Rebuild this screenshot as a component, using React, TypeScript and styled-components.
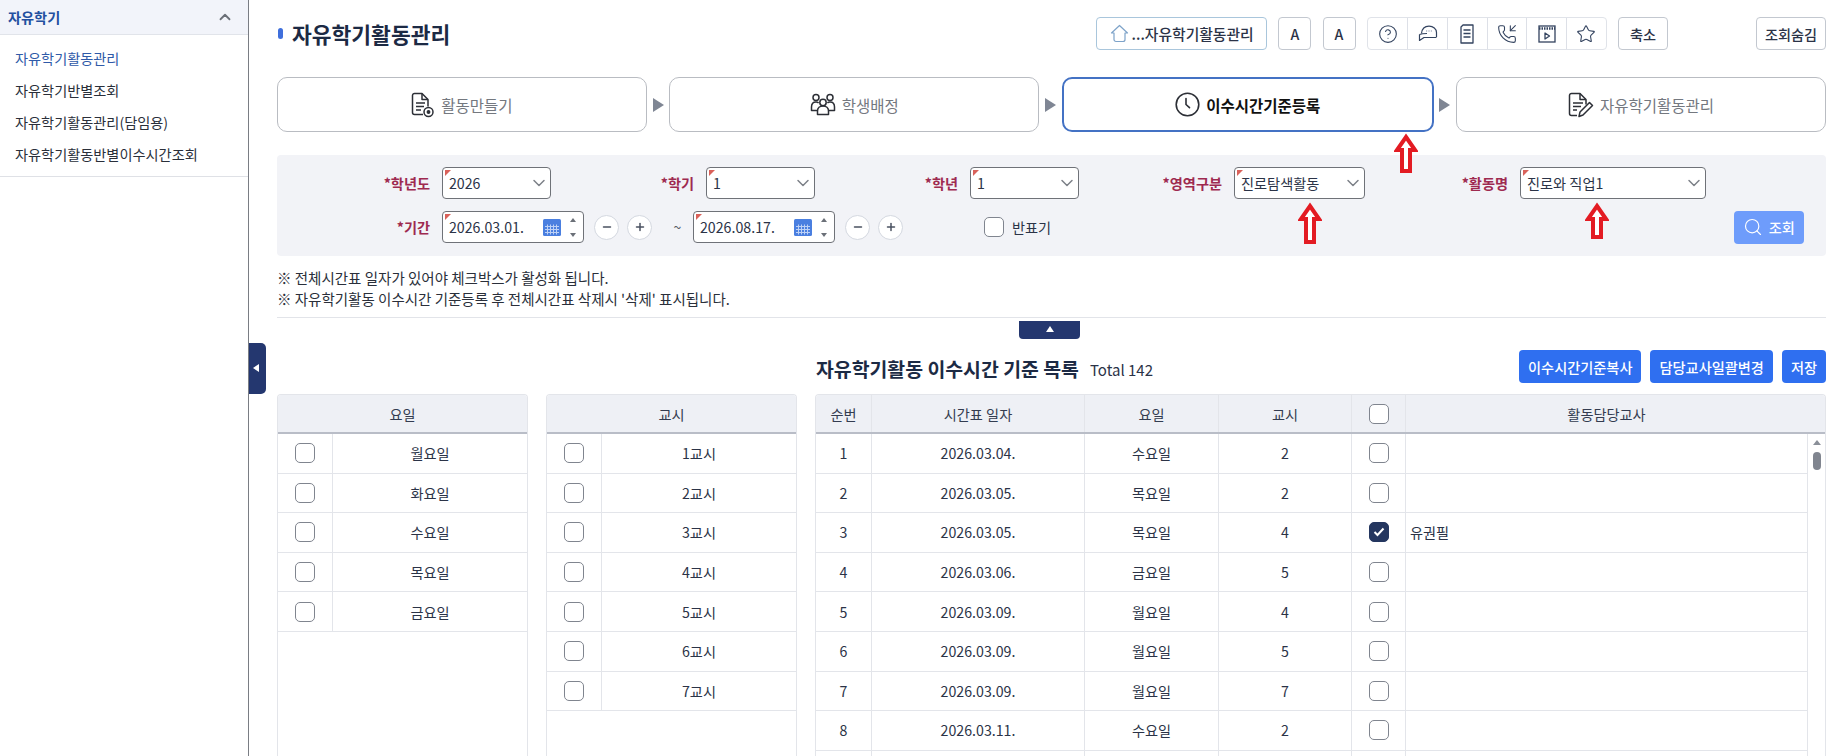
import React from "react";
import styled, { createGlobalStyle } from "styled-components";
import { ChevronDown, ChevronUp, CircleHelp, Minus, PhoneIncoming, Plus, Search, Star } from "lucide-react";

const GlobalStyle = createGlobalStyle`
  html, body, #root {
    height: 100%;
    margin: 0;
  }
  body {
    font-family: "Noto Sans CJK KR", "Noto Sans", sans-serif;
    font-size: 14.2px;
    color: #2b3347;
    background: #ffffff;
    overflow: hidden;
  }
  * {
    box-sizing: border-box;
  }
`;

const Page = styled.div`
  position: relative;
  display: flex;
  height: 756px;
  overflow: hidden;
`;

const Sidebar = styled.aside`
  flex: 0 0 249px;
  border-right: 1.5px solid #7a7d84;
`;

const SideHead = styled.div`
  display: flex;
  align-items: center;
  justify-content: space-between;
  height: 35px;
  padding: 0 14px 0 8px;
  background: #f2f4fa;
  border-bottom: 1px solid #e1e4ea;
  color: #2350a0;
  font-weight: 700;
  svg {
    color: #6b7078;
  }
`;

const SideList = styled.ul`
  list-style: none;
  margin: 0;
  padding: 6.5px 0 6.5px 15px;
  border-bottom: 1px solid #dfe1e6;
`;

const SideItem = styled.li<{ $active?: boolean }>`
  height: 32px;
  line-height: 32px;
  color: ${(p) => (p.$active ? "#2f5aa8" : "#2a2f3a")};
`;

const SideToggle = styled.button`
  position: absolute;
  left: 249px;
  top: 343px;
  width: 17px;
  height: 51px;
  padding: 0;
  border: none;
  border-radius: 0 5px 5px 0;
  background: #24376f;
  &::before {
    content: "";
    position: absolute;
    left: 4px;
    top: 21px;
    border-style: solid;
    border-width: 4.5px 6px 4.5px 0;
    border-color: transparent #ffffff transparent transparent;
  }
`;

const Main = styled.main`
  flex: 1;
  min-width: 0;
  display: flex;
  flex-direction: column;
  padding: 17px 19px 0 28px;
`;

const Header = styled.header`
  display: flex;
  align-items: center;
  gap: 11.2px;
  height: 33px;
`;

const Title = styled.h1`
  display: flex;
  align-items: center;
  gap: 9px;
  margin: -1px auto 0 1px;
  font-size: 21.5px;
  font-weight: 700;
  color: #1c2a44;
  &::before {
    content: "";
    width: 5px;
    height: 11px;
    border-radius: 3px;
    background: #3f6fdc;
  }
`;

const ToolButton = styled.button<{ $width: number; $blue?: boolean; $gapLeft?: number }>`
  display: flex;
  align-items: center;
  justify-content: center;
  gap: 3px;
  width: ${(p) => p.$width}px;
  height: 33px;
  margin-left: ${(p) => p.$gapLeft ?? 0}px;
  padding: 0;
  background: #ffffff;
  border: 1px solid ${(p) => (p.$blue ? "#a9c6dc" : "#c3c8d0")};
  border-radius: 4px;
  font: inherit;
  font-size: ${(p) => (p.$blue ? "14.8px" : "14.2px")};
  font-weight: 500;
  color: #2b3347;
  white-space: nowrap;
`;

const IconGroup = styled.div`
  display: flex;
  height: 33px;
  border: 1px solid #e0e3e9;
  border-radius: 4px;
`;

const IconCell = styled.div`
  display: flex;
  align-items: center;
  justify-content: center;
  width: 39.7px;
  color: #33435f;
  & + & {
    border-left: 1px solid #dde0e7;
  }
`;

const Steps = styled.div`
  display: flex;
  height: 55px;
  margin-top: 27px;
`;

const Step = styled.div<{ $active?: boolean }>`
  flex: 1;
  display: flex;
  align-items: center;
  justify-content: center;
  gap: 6px;
  background: #ffffff;
  border: ${(p) => (p.$active ? "2px solid #4472c4" : "1px solid #b9bcc2")};
  border-radius: 10px;
  font-size: 15.5px;
  font-weight: ${(p) => (p.$active ? 700 : 400)};
  color: ${(p) => (p.$active ? "#111111" : "#74787f")};
  svg {
    color: #2c2f36;
  }
`;

const StepArrow = styled.div`
  flex: 0 0 22.5px;
  display: flex;
  align-items: center;
  justify-content: center;
  &::before {
    content: "";
    border-style: solid;
    border-width: 7px 0 7px 11px;
    border-color: transparent transparent transparent #7f8694;
  }
`;

const SearchPanel = styled.section`
  display: flex;
  flex-direction: column;
  gap: 12px;
  height: 101px;
  margin-top: 23px;
  padding-top: 12px;
  background: #f2f3f7;
  border-radius: 4px;
`;

const SearchRow = styled.div`
  display: flex;
  align-items: center;
  height: 32px;
`;

const FieldLabel = styled.label<{ $width: number }>`
  flex: 0 0 ${(p) => p.$width}px;
  padding-right: 12px;
  text-align: right;
  font-weight: 700;
  color: #9e2a50;
`;

const RequiredBox = styled.div<{ $width: number }>`
  position: relative;
  flex: 0 0 ${(p) => p.$width}px;
  display: flex;
  align-items: center;
  height: 32px;
  padding: 0 7px 0 6px;
  background: #ffffff;
  border: 1px solid #6f7278;
  border-radius: 4px;
  color: #2b3347;
  &::before {
    content: "";
    position: absolute;
    left: 2px;
    top: 2px;
    border-style: solid;
    border-width: 6px 6px 0 0;
    border-color: #d9615a transparent transparent transparent;
  }
`;

const BoxText = styled.span`
  flex: 1;
  white-space: nowrap;
`;

const SelectChevron = styled(ChevronDown)`
  color: #7d8188;
  margin-right: -6px;
`;

const Spinner = styled.div`
  display: flex;
  flex-direction: column;
  justify-content: space-between;
  height: 19px;
  margin-left: 9px;
  span {
    border-style: solid;
    border-width: 0 3px 4px 3px;
    border-color: transparent transparent #6b7078 transparent;
  }
  span + span {
    border-width: 4px 3px 0 3px;
    border-color: #6b7078 transparent transparent transparent;
  }
`;

const RoundGroup = styled.div`
  display: flex;
  gap: 8px;
  margin-left: 10px;
`;

const RoundButton = styled.button`
  display: flex;
  align-items: center;
  justify-content: center;
  width: 25px;
  height: 25px;
  padding: 0;
  background: #ffffff;
  border: 1px solid #d4d8e0;
  border-radius: 50%;
  color: #4a5160;
`;

const Tilde = styled.span`
  flex: 0 0 41px;
  padding-left: 10px;
  text-align: center;
  font-size: 14px;
  color: #555a63;
`;

const Check = styled.span<{ $checked?: boolean }>`
  flex: 0 0 20px;
  display: inline-flex;
  align-items: center;
  justify-content: center;
  width: 20px;
  height: 20px;
  background: ${(p) => (p.$checked ? "#24365f" : "#ffffff")};
  border: 1.5px solid ${(p) => (p.$checked ? "#24365f" : "#80858f")};
  border-radius: 5px;
`;

const HalfCheck = styled.label`
  display: flex;
  align-items: center;
  gap: 8px;
  margin-left: 81px;
`;

const SearchButton = styled.button`
  display: flex;
  align-items: center;
  justify-content: center;
  gap: 6px;
  width: 70.5px;
  height: 33px;
  margin: 0 22px 0 auto;
  padding: 0;
  border: none;
  border-radius: 4px;
  background: #6e9cfb;
  color: #ffffff;
  font: inherit;
  font-weight: 500;
`;

const Notes = styled.div`
  margin-top: 10.5px;
  padding-bottom: 7.5px;
  font-size: 14.5px;
  line-height: 21.5px;
  border-bottom: 1px solid #e2e4e9;
  color: #2a2f3a;
`;

const CollapseTab = styled.button`
  position: relative;
  align-self: center;
  width: 61px;
  height: 18px;
  margin: 3px 5px 0 0;
  padding: 0;
  border: none;
  border-radius: 0 0 4px 4px;
  background: #24376f;
  &::before {
    content: "";
    position: absolute;
    left: 27px;
    top: 5px;
    border-style: solid;
    border-width: 0 4.5px 6px 4.5px;
    border-color: transparent transparent #ffffff transparent;
  }
`;

const ListHead = styled.div`
  display: flex;
  align-items: flex-end;
  height: 33px;
  margin-top: 11px;
  padding-left: 539px;
`;

const ListTitle = styled.h2`
  margin: 0;
  font-size: 19.4px;
  line-height: 28px;
  font-weight: 700;
  color: #1c2a44;
`;

const Total = styled.span`
  margin: 0 auto 0 11px;
  font-size: 15px;
  line-height: 27px;
  color: #2b3347;
`;

const ActionRow = styled.div`
  display: flex;
  align-self: stretch;
  gap: 9px;
`;

const ActionButton = styled.button`
  height: 33px;
  padding: 0 9px;
  border: none;
  border-radius: 4px;
  background: #2f6ff0;
  color: #ffffff;
  font: inherit;
  font-weight: 500;
  white-space: nowrap;
`;

const Tables = styled.div`
  flex: 1;
  min-height: 0;
  display: flex;
  gap: 18px;
  margin-top: 11px;
`;

const Table = styled.div<{ $width: number }>`
  flex: 0 0 ${(p) => p.$width}px;
  display: flex;
  flex-direction: column;
  border: 1px solid #e3e5ea;
  border-bottom: none;
  border-radius: 4px 4px 0 0;
  overflow: hidden;
`;

const HeadRow = styled.div<{ $cols: string; $railGap?: number }>`
  flex: 0 0 39px;
  display: grid;
  grid-template-columns: ${(p) => p.$cols};
  padding-right: ${(p) => p.$railGap ?? 0}px;
  background: #eef0f5;
  border-bottom: 2px solid #b9bdc7;
  color: #333c50;
`;

const BodyWrap = styled.div`
  flex: 1;
  min-height: 0;
  display: flex;
`;

const RowList = styled.div`
  flex: 1;
  min-width: 0;
`;

const BodyRow = styled.div<{ $cols: string }>`
  display: grid;
  grid-template-columns: ${(p) => p.$cols};
  height: 39.6px;
  border-bottom: 1px solid #e3e5ea;
`;

const Cell = styled.div<{ $left?: boolean }>`
  display: flex;
  align-items: center;
  justify-content: ${(p) => (p.$left ? "flex-start" : "center")};
  padding-left: ${(p) => (p.$left ? "4px" : "0")};
  white-space: nowrap;
  & + & {
    border-left: 1px solid #e3e5ea;
  }
`;

const ScrollRail = styled.div`
  position: relative;
  flex: 0 0 18px;
  border-left: 1px solid #e3e5ea;
  &::before {
    content: "";
    position: absolute;
    left: 5px;
    top: 6px;
    border-style: solid;
    border-width: 0 4px 5px 4px;
    border-color: transparent transparent #8a8f98 transparent;
  }
  &::after {
    content: "";
    position: absolute;
    left: 5px;
    top: 18px;
    width: 8px;
    height: 18px;
    border-radius: 4px;
    background: #80858f;
  }
`;

const MarkArrow = styled.svg<{ $left: number; $top: number }>`
  position: absolute;
  left: ${(p) => p.$left}px;
  top: ${(p) => p.$top}px;
`;

const DocIcon = () => (
  <svg width="24" height="26" viewBox="0 0 24 26" fill="none" stroke="currentColor" strokeWidth="1.5" strokeLinejoin="round">
    <path d="M12 22.5H3.500a2 2 0 0 1-2-2V3.500a2 2 0 0 1 2-2H11l6 6v7" />
    <path d="M11 1.500v6h6" />
    <path d="M5 11h9M5 14.500h8M5 18h5" />
    <circle cx="17.500" cy="20" r="4.500" />
    <circle cx="17.500" cy="20" r="1.200" fill="currentColor" />
  </svg>
);

const PeopleIcon = () => (
  <svg width="26" height="23" viewBox="0 0 26 23" fill="none" stroke="currentColor" strokeWidth="1.5" strokeLinejoin="round">
    <circle cx="6" cy="4.500" r="3" />
    <circle cx="20" cy="4.500" r="3" />
    <circle cx="13" cy="9.500" r="3.200" />
    <path d="M7 17.500H1.500v-3.500c0-3 1.800-5 4.500-5 1 0 2 .3 2.600 .8" />
    <path d="M19 17.500h5.500v-3.500c0-3-1.800-5-4.500-5-1 0-2 .3-2.600 .8" />
    <path d="M7.500 21.500v-3.500c0-3 2.300-5 5.500-5s5.500 2 5.500 5v3.500z" />
  </svg>
);

const ClockIcon = () => (
  <svg width="25" height="25" viewBox="0 0 25 25" fill="none" stroke="currentColor" strokeWidth="1.6" strokeLinecap="round">
    <circle cx="12.500" cy="12.500" r="11.300" />
    <path d="M11 6.500v6l3.500 3.200" />
  </svg>
);

const WriteIcon = () => (
  <svg width="26" height="26" viewBox="0 0 26 26" fill="none" stroke="currentColor" strokeWidth="1.5" strokeLinejoin="round">
    <path d="M9 23.500H3.500a2 2 0 0 1-2-2V3.500a2 2 0 0 1 2-2H12l6 6v5" />
    <path d="M12 1.500v6h6" />
    <path d="M5 11h10M5 14.500h8M5 18h4" />
    <path d="M11 24.500l1-4.500 9.500-9.500 3 3-9.500 9.500z" />
  </svg>
);

const ChatIcon = () => (
  <svg width="20" height="17" viewBox="0 0 20 17" fill="none" stroke="currentColor" strokeWidth="1.2" strokeLinejoin="round">
    <path d="M3.500 8.500C4 3.800 7 1.200 11 1.200c4.200 0 7.500 2.500 7.500 6.300V12" />
    <path d="M1.500 9.500c2.500-1 5-1 7.500-1M1.500 9.500V15.500L6 12.500H18.500" />
    <path d="M8 6h7" strokeDasharray="1.200 1.200" stroke="#8a94a8" />
  </svg>
);

const ListDocIcon = () => (
  <svg width="14" height="20" viewBox="0 0 14 20" fill="none" stroke="currentColor" strokeWidth="1.3">
    <path d="M3 1h10v18H1V3z" strokeLinejoin="round" />
    <path d="M3.500 6h7M3.500 9.500h7M3.500 13h7" />
  </svg>
);

const VideoIcon = () => (
  <svg width="18" height="18" viewBox="0 0 18 18" fill="none" stroke="currentColor" strokeWidth="1.3">
    <rect x="1" y="1" width="16" height="16" />
    <path d="M1 3.500h16" strokeWidth="2.500" strokeDasharray="1.500 1" />
    <path d="M7 8v6l4.500-3z" strokeLinejoin="round" />
  </svg>
);

const HomeIcon = () => (
  <svg width="19" height="19" viewBox="0 0 19 19" fill="none" stroke="#7ea3c9" strokeWidth="1.2" strokeLinejoin="round">
    <path d="M1.500 9L9.500 1.500 17.500 9H15v6.500a2 2 0 0 1-2 2H6a2 2 0 0 1-2-2V9z" />
  </svg>
);

const CalendarIcon = () => (
  <svg width="18" height="17" viewBox="0 0 18 17">
    <rect width="18" height="17" rx="1.500" fill="#4a7fe0" />
    <path d="M2 7.500h14M2 10.500h14M2 13.500h14M4.500 5.500v10M7.500 5.500v10M10.500 5.500v10M13.500 5.500v10" stroke="#bcd0f5" strokeWidth="1" />
  </svg>
);

const TickIcon = () => (
  <svg width="12" height="10" viewBox="0 0 12 10" fill="none" stroke="#ffffff" strokeWidth="2">
    <path d="M1.500 5l3 3 6-6.500" />
  </svg>
);

const RedArrow = ({ left, top, height }: { left: number; top: number; height: number }) => (
  <MarkArrow $left={left} $top={top} width="24" height={height} viewBox={`0 0 24 ${height}`} fill="#ffffff" stroke="#e31b23" strokeWidth="4" strokeLinejoin="miter">
    <path d={`M12 4L21 17H16V${height - 2}H8V17H3Z`} />
  </MarkArrow>
);

const SelectBox = ({ width, value }: { width: number; value: string }) => (
  <RequiredBox $width={width}>
    <BoxText>{value}</BoxText>
    <SelectChevron size={20} strokeWidth={1.8} />
  </RequiredBox>
);

const DateBox = ({ value }: { value: string }) => (
  <RequiredBox $width={142}>
    <BoxText>{value}</BoxText>
    <CalendarIcon />
    <Spinner>
      <span />
      <span />
    </Spinner>
  </RequiredBox>
);

const Steppers = () => (
  <RoundGroup>
    <RoundButton>
      <Minus size={12} strokeWidth={3} />
    </RoundButton>
    <RoundButton>
      <Plus size={12} strokeWidth={3} />
    </RoundButton>
  </RoundGroup>
);

const checkCols = "54px 1fr";
const listCols = "55px 213px 134px 133px 54px 1fr";

const days = ["월요일", "화요일", "수요일", "목요일", "금요일"];
const periods = ["1교시", "2교시", "3교시", "4교시", "5교시", "6교시", "7교시"];
const rows = [
  { no: "1", date: "2026.03.04.", day: "수요일", period: "2" },
  { no: "2", date: "2026.03.05.", day: "목요일", period: "2" },
  { no: "3", date: "2026.03.05.", day: "목요일", period: "4", teacher: "유권필" },
  { no: "4", date: "2026.03.06.", day: "금요일", period: "5" },
  { no: "5", date: "2026.03.09.", day: "월요일", period: "4" },
  { no: "6", date: "2026.03.09.", day: "월요일", period: "5" },
  { no: "7", date: "2026.03.09.", day: "월요일", period: "7" },
  { no: "8", date: "2026.03.11.", day: "수요일", period: "2" },
  { no: "", date: "", day: "", period: "" },
];

const CheckTable = ({ title, items }: { title: string; items: string[] }) => (
  <Table $width={251}>
    <HeadRow $cols="1fr">
      <Cell>{title}</Cell>
    </HeadRow>
    <RowList>
      {items.map((item) => (
        <BodyRow key={item} $cols={checkCols}>
          <Cell>
            <Check />
          </Cell>
          <Cell>{item}</Cell>
        </BodyRow>
      ))}
    </RowList>
  </Table>
);

export default function App() {
  return (
    <Page>
      <GlobalStyle />
      <Sidebar>
        <SideHead>
          자유학기
          <ChevronUp size={18} strokeWidth={2.4} />
        </SideHead>
        <SideList>
          <SideItem $active>자유학기활동관리</SideItem>
          <SideItem>자유학기반별조회</SideItem>
          <SideItem>자유학기활동관리(담임용)</SideItem>
          <SideItem>자유학기활동반별이수시간조회</SideItem>
        </SideList>
      </Sidebar>
      <SideToggle />

      <Main>
        <Header>
          <Title>자유학기활동관리</Title>
          <ToolButton $width={171} $blue>
            <HomeIcon />
            ...자유학기활동관리
          </ToolButton>
          <ToolButton $width={33}>A</ToolButton>
          <ToolButton $width={33}>A</ToolButton>
          <IconGroup>
            <IconCell>
              <CircleHelp size={20} strokeWidth={1.3} />
            </IconCell>
            <IconCell>
              <ChatIcon />
            </IconCell>
            <IconCell>
              <ListDocIcon />
            </IconCell>
            <IconCell>
              <PhoneIncoming size={20} strokeWidth={1.3} />
            </IconCell>
            <IconCell>
              <VideoIcon />
            </IconCell>
            <IconCell>
              <Star size={20} strokeWidth={1.3} />
            </IconCell>
          </IconGroup>
          <ToolButton $width={50}>축소</ToolButton>
          <ToolButton $width={70} $gapLeft={76.8}>
            조회숨김
          </ToolButton>
        </Header>

        <Steps>
          <Step>
            <DocIcon />
            활동만들기
          </Step>
          <StepArrow />
          <Step>
            <PeopleIcon />
            학생배정
          </Step>
          <StepArrow />
          <Step $active>
            <ClockIcon />
            이수시간기준등록
          </Step>
          <StepArrow />
          <Step>
            <WriteIcon />
            자유학기활동관리
          </Step>
        </Steps>

        <SearchPanel>
          <SearchRow>
            <FieldLabel $width={165}>*학년도</FieldLabel>
            <SelectBox width={109} value="2026" />
            <FieldLabel $width={155}>*학기</FieldLabel>
            <SelectBox width={109} value="1" />
            <FieldLabel $width={155}>*학년</FieldLabel>
            <SelectBox width={109} value="1" />
            <FieldLabel $width={155}>*영역구분</FieldLabel>
            <SelectBox width={131} value="진로탐색활동" />
            <FieldLabel $width={155}>*활동명</FieldLabel>
            <SelectBox width={186} value="진로와 직업1" />
          </SearchRow>
          <SearchRow>
            <FieldLabel $width={165}>*기간</FieldLabel>
            <DateBox value="2026.03.01." />
            <Steppers />
            <Tilde>~</Tilde>
            <DateBox value="2026.08.17." />
            <Steppers />
            <HalfCheck>
              <Check />
              반표기
            </HalfCheck>
            <SearchButton>
              <Search size={20} strokeWidth={1.4} />
              조회
            </SearchButton>
          </SearchRow>
        </SearchPanel>

        <Notes>
          ※ 전체시간표 일자가 있어야 체크박스가 활성화 됩니다.
          <br />※ 자유학기활동 이수시간 기준등록 후 전체시간표 삭제시 '삭제' 표시됩니다.
        </Notes>
        <CollapseTab />

        <ListHead>
          <ListTitle>자유학기활동 이수시간 기준 목록</ListTitle>
          <Total>Total 142</Total>
          <ActionRow>
            <ActionButton>이수시간기준복사</ActionButton>
            <ActionButton>담당교사일괄변경</ActionButton>
            <ActionButton>저장</ActionButton>
          </ActionRow>
        </ListHead>

        <Tables>
          <CheckTable title="요일" items={days} />
          <CheckTable title="교시" items={periods} />
          <Table $width={1011}>
            <HeadRow $cols={listCols} $railGap={18}>
              <Cell>순번</Cell>
              <Cell>시간표 일자</Cell>
              <Cell>요일</Cell>
              <Cell>교시</Cell>
              <Cell>
                <Check />
              </Cell>
              <Cell>활동담당교사</Cell>
            </HeadRow>
            <BodyWrap>
              <RowList>
                {rows.map((row, i) => (
                  <BodyRow key={i} $cols={listCols}>
                    <Cell>{row.no}</Cell>
                    <Cell>{row.date}</Cell>
                    <Cell>{row.day}</Cell>
                    <Cell>{row.period}</Cell>
                    <Cell>
                      {row.no && <Check $checked={!!row.teacher}>{row.teacher && <TickIcon />}</Check>}
                    </Cell>
                    <Cell $left>{row.teacher}</Cell>
                  </BodyRow>
                ))}
              </RowList>
              <ScrollRail />
            </BodyWrap>
          </Table>
        </Tables>
      </Main>

      <RedArrow left={1394} top={133} height={40} />
      <RedArrow left={1298} top={202} height={42} />
      <RedArrow left={1585} top={202} height={37} />
    </Page>
  );
}
